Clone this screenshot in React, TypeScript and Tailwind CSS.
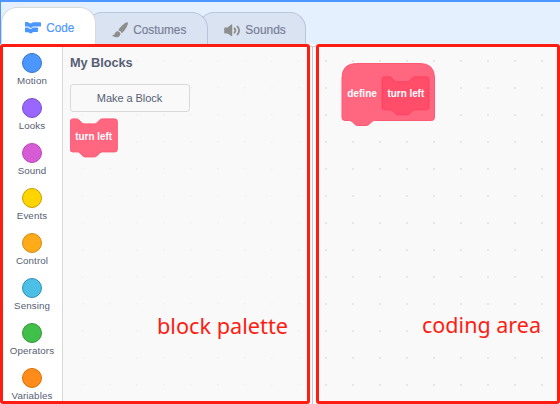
import React from "react";

const categories = [
  { name: "Motion", fill: "#4c97ff", stroke: "#3373cc" },
  { name: "Looks", fill: "#9966ff", stroke: "#774dcb" },
  { name: "Sound", fill: "#d65cd6", stroke: "#bd42bd" },
  { name: "Events", fill: "#ffd500", stroke: "#cc9900" },
  { name: "Control", fill: "#ffab19", stroke: "#cf8b17" },
  { name: "Sensing", fill: "#4cbfe6", stroke: "#2e8eb8" },
  { name: "Operators", fill: "#40bf4a", stroke: "#389438" },
  { name: "Variables", fill: "#ff8c1a", stroke: "#db6e00" },
];

function CodeIcon() {
  return (
    <svg width="16" height="12" viewBox="0 0 16 12" className="shrink-0" fill="#4c97ff">
      <path d="M.7 0h2.2l1.5 1.3h2L8 .2h7.3q.7 0 .7.7v3q0 .7-.7.7H8L6.8 5.7h-2L3.3 4.6H.7Q0 4.6 0 3.9V.7Q0 0 .7 0Z" />
      <path d="M.7 5.4h2.2l1.5 1.3h2L8 5.6h4.3q.7 0 .7.7v3q0 .7-.7.7H8L6.8 11.3h-2L3.3 10.2H.7Q0 10.2 0 9.5V6Q0 5.4.7 5.4Z" />
    </svg>
  );
}

function BrushIcon() {
  return (
    <svg width="16" height="16" viewBox="0 0 16 16" className="shrink-0" fill="#8d8d8d">
      <path d="M15.2.3C13 .6 8.2 4.600 6.400 8.200Q8.900 8.700 9.600 11.200C13 8.700 15.600 4 15.900 1.200Q16 .2 15.200.3Z" />
      <path d="M6 9.200Q3.800 9 3 11.200C2.500 12.500 1.900 13.100.2 13.100C1 15.400 5.700 16 7.600 13.900Q8.800 12.500 8.400 11.500Q7.800 9.600 6 9.200Z" />
    </svg>
  );
}

function SpeakerIcon() {
  return (
    <svg width="17" height="13" viewBox="0 0 17 13" className="shrink-0">
      <path d="M1 3.5h2.500L7.300.5Q8.200 0 8.200 1v10.500q0 1-.9.5L3.500 9.500H1Q.2 9.500.2 8.700V4.300Q.2 3.500 1 3.500Z" fill="#8d8d8d" />
      <path d="M10.500 4.500q2 2 0 4M13.500 2.500q3.200 4 0 8" fill="none" stroke="#8d8d8d" strokeWidth="1.8" strokeLinecap="round" />
    </svg>
  );
}

function TabLabel({ width, color, children }: { width: number; color: string; children: string }) {
  return (
    <svg width={Math.ceil(width) + 6} height="18" className="ml-[5px] shrink-0 overflow-visible">
      <text x="0.3" y="13" textLength={width} lengthAdjust="spacingAndGlyphs" fill={color} stroke={color} strokeWidth="0.2" className="text-[13px]">
        {children}
      </text>
    </svg>
  );
}

function Label({ x, y, w, children }: { x: number; y: number; w: number; children: string }) {
  return (
    <text x={x} y={y} textLength={w} lengthAdjust="spacingAndGlyphs" fill="#fff" className="text-[11px] font-bold">
      {children}
    </text>
  );
}

function CallBlock() {
  return (
    <svg width="49" height="41" viewBox="0 0 49 41" className="mt-[6px]">
      <path
        transform="translate(-0.2 0.4)"
        d="M2.9.5h3.600q1.500 0 2.500 1l3 3q1 1 2.500 1h10q1.500 0 2.500-1l3-3q1-1 2.500-1h12.500q2.500 0 2.500 2.500v28q0 2.500-2.500 2.500H32.500q-1.500 0-2.500 1l-3 3q-1 1-2.500 1h-9q-1.500 0-2.500-1l-3-3q-1-1-2.500-1h-4.600Q.5 33.500.5 31V3Q.5.5 2.9.5Z"
        fill="#ff6680" stroke="#ff5873"
      />
      <Label x={5.3} y={22} w={36.7}>turn left</Label>
    </svg>
  );
}

function DefineBlock() {
  return (
    <svg width="95" height="64" viewBox="0 0 95 64">
      <path
        d="M1 15Q1 .5 15.500 .5h63.500Q93.500.5 93.500 15v39.500q0 3-3 3h-57q-1.500 0-2.500 1l-3 3q-1 1-2.500 1h-9q-1.500 0-2.500-1l-3-3q-1-1-2.500-1H4q-3 0-3-3Z"
        fill="#ff6680" stroke="#ff5873"
      />
      <path
        d="M43.500 13.800h4.500q1.500 0 2.500 1l3 3q1 1 2.500 1h10q1.500 0 2.500-1l3-3q1-1 2.500-1h11.500q2.500 0 2.500 2.500v28q0 2.500-2.500 2.500H74q-1.500 0-2.500 1l-3 3q-1 1-2.500 1h-9q-1.500 0-2.500-1l-3-3q-1-1-2.500-1h-5.500q-2.500 0-2.500-2.500v-28q0-2.500 2.500-2.500Z"
        fill="#ff4d6a" stroke="#ff3355" strokeOpacity="0.6"
      />
      <Label x={6.2} y={34} w={29.8}>define</Label>
      <Label x={46.5} y={34} w={36.7}>turn left</Label>
    </svg>
  );
}

const tab = "flex items-center rounded-t-[16px] border border-b-0 border-[#b9c5d8] bg-[#d9e3f2]";

export default function App() {
  return (
    <div className="flex h-[404px] w-[560px] flex-col overflow-hidden bg-[#e5f0ff] font-['Liberation_Sans',sans-serif]">
      <div className="h-[2px] shrink-0 bg-[#4c97ff]" />
      <div className="flex h-[42px] shrink-0 items-end border-l border-[#4c97ff]">
        <div className="z-10 flex h-[37px] w-[95px] items-center rounded-t-[16px] border border-b-0 border-[#d9d9d9] bg-white pl-[23px] pt-[4px]">
          <CodeIcon />
          <TabLabel width={28} color="#4c97ff">Code</TabLabel>
        </div>
        <div className={`${tab} z-[5] -ml-[10px] h-[32px] w-[122px] pl-[25px] pt-[3px]`}>
          <BrushIcon />
          <TabLabel width={53} color="#787f98">Costumes</TabLabel>
        </div>
        <div className={`${tab} -ml-[10px] h-[32px] w-[108px] pl-[25px] pt-[3px]`}>
          <SpeakerIcon />
          <div className="-ml-px">
            <TabLabel width={40.5} color="#787f98">Sounds</TabLabel>
          </div>
        </div>
      </div>
      <main className="flex h-[360px] bg-[#f9f9f9]">
        <section className="flex w-[310px] overflow-hidden rounded-[3px] border-[3px] border-[#ff1d12]">
          <nav className="flex w-[60px] shrink-0 flex-col border-r border-[#d9d9d9] bg-white pr-px pt-[6px]">
            {categories.map((c) => (
              <div key={c.name} className="flex h-[45px] shrink-0 flex-col items-center">
                <svg width="20" height="20"><circle cx="10" cy="10" r="9.5" fill={c.fill} stroke={c.stroke} /></svg>
                <span className="mt-[1px] text-[9.75px] leading-[13px] tracking-[0.1px] text-[#575e75]">{c.name}</span>
              </div>
            ))}
          </nav>
          <div className="flex grow flex-col items-start bg-[radial-gradient(circle,#f3f3f3_1px,transparent_1px)] bg-[length:27px_27px] bg-[position:6px_0px] pl-[7px] pt-[7px]">
            <h2 className="h-[17px] text-[12.8px] font-bold leading-[17px] tracking-[-0.08px] text-[#575e75]">My Blocks</h2>
            <button className="mt-[13px] h-[28px] w-[120px] rounded-[3px] border border-[#d9d9d9] bg-[#f9f9f9] pr-px text-[11px] tracking-[-0.05px] text-[#575e75]">Make a Block</button>
            <CallBlock />
            <svg width="136" height="34" className="ml-[86px] mt-[152px]">
              <text x="1" y="23" textLength="131" lengthAdjust="spacingAndGlyphs" fill="#ff1d12" className="font-['Noto_Sans',sans-serif] text-[21.5px]">block palette</text>
            </svg>
          </div>
        </section>
        <div className="mt-[2px] w-[6px] shrink-0 border-t border-[#c5cfdf]"><div className="ml-[2px] h-full w-px bg-[#c8c8c8]" /></div>
        <section className="grid w-[244px] overflow-hidden rounded-[3px] border-[3px] border-[#ff1d12]">
          <svg width="238" height="354" className="col-start-1 row-start-1">
            <defs><pattern id="grid" x="6" y="13" width="27" height="27" patternUnits="userSpaceOnUse"><rect width="2" height="2" fill="#e6e6e6" /></pattern></defs>
            <rect width="238" height="354" fill="url(#grid)" />
          </svg>
          <div className="col-start-1 row-start-1 flex flex-col pl-[22px] pt-[16px]">
            <DefineBlock />
            <svg width="126" height="34" className="ml-[80px] mt-[182px]">
              <text x="1" y="24" textLength="119" lengthAdjust="spacingAndGlyphs" fill="#ff1d12" className="font-['Noto_Sans',sans-serif] text-[21.5px]">coding area</text>
            </svg>
          </div>
        </section>
      </main>
    </div>
  );
}
